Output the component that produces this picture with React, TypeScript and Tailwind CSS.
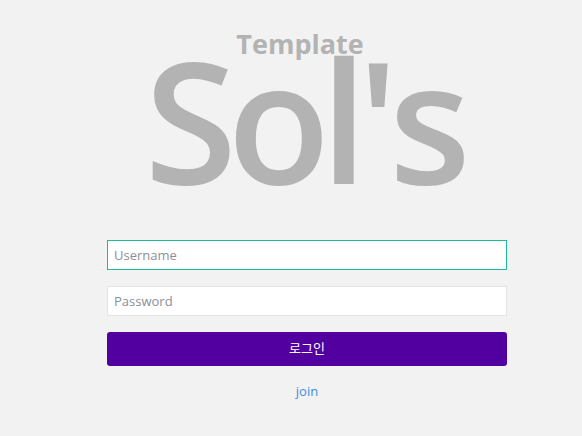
import * as React from "react"

export default function App() {
  return (
    <div className="min-h-[436px] w-full bg-[#f2f2f2] pl-[32px] font-['Open_Sans','Noto_Sans',sans-serif]">
      <div className="flex flex-col items-center pt-[22px]">
        <div className="relative flex flex-col items-center">
          <div className="relative z-10 mr-[14px] text-[27px] font-bold leading-[44px] text-[#b3b3b3]">Template</div>
          <div className="-mt-[42px] mr-[8px] text-[168px] font-semibold leading-[190px] tracking-[-9.5px] text-[#b3b3b3]">Sol's</div>
        </div>
        <form className="mt-[26px] flex w-[400px] flex-col" onSubmit={(e) => e.preventDefault()}>
          <input
            type="text"
            autoFocus
            placeholder="Username"
            className="h-[30px] w-full border border-[#1abc9c] bg-white px-[6px] text-[13px] text-[#555] caret-[#333] outline-none placeholder:text-[#8a8f96]"
          />
          <input
            type="password"
            placeholder="Password"
            className="mt-[16px] h-[30px] w-full border border-[#e4e4e4] bg-white px-[6px] text-[13px] text-[#555] outline-none placeholder:text-[#8a8f96]"
          />
          <button
            type="submit"
            className="mt-[16px] h-[34px] w-full rounded-[3px] bg-[#5200a0] text-[13px] text-white font-['Open_Sans','Noto_Sans_CJK_KR',sans-serif]"
          >
            로그인
          </button>
          <a href="#" className="mt-[16px] self-center text-[13px] text-[#3a8ee6]">join</a>
        </form>
      </div>
    </div>
  )
}
